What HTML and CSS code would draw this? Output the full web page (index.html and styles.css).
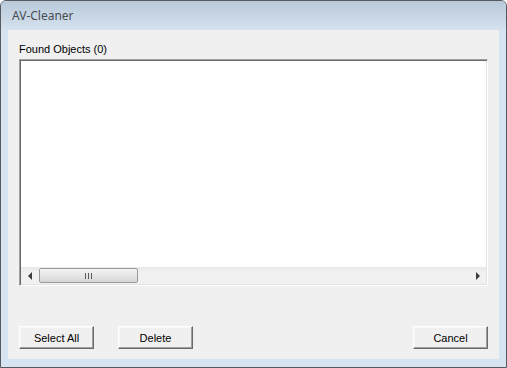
FILE: index.html
```html
<!DOCTYPE html>
<html lang="en">
<head>
  <meta charset="UTF-8">
  <title>AV-Cleaner</title>
  <link rel="stylesheet" href="styles.css">
</head>
<body>

<div class="window">
  <div class="title-bar">AV-Cleaner</div>
  <div class="client">
    <div class="list-label">Found Objects (0)</div>
    <div class="list-box">
      <div class="list-body"></div>
      <div class="h-scroll">
        <div class="arrow left"><span></span></div>
        <div class="track">
          <div class="thumb"><i></i><i></i><i></i></div>
        </div>
        <div class="arrow right"><span></span></div>
      </div>
    </div>
    <div class="buttons">
      <button>Select All</button>
      <button>Delete</button>
      <button class="push-right">Cancel</button>
    </div>
  </div>
</div>

</body>
</html>
```

FILE: styles.css
```css
body {
  margin: 0;
  font-family: 'Liberation Sans', Arial, sans-serif;
  font-size: 11px;
  background: #ffffff;
}

.window {
  width: 505px;
  height: 366px;
  border: 1px solid #555a60;
  border-radius: 6px 6px 0 0;
  background: #d6e3f0;
  display: flex;
  flex-direction: column;
}

.title-bar {
  height: 29px;
  line-height: 29px;
  padding-left: 11px;
  font-family: 'Noto Sans', 'Open Sans', sans-serif;
  font-size: 12px;
  color: #474c52;
  background: linear-gradient(to bottom, #b9c9d8, #d5e2ef);
  border-radius: 5px 5px 0 0;
}

.client {
  margin: 0 7px 8px;
  height: 329px;
  box-sizing: border-box;
  padding: 12px 11px 10px;
  background: #f0f0f0;
  display: flex;
  flex-direction: column;
}

.list-label {
  height: 14px;
  line-height: 14px;
  margin-bottom: 3px;
  color: #000;
}

.list-box {
  height: 227px;
  box-sizing: border-box;
  border: 1px solid;
  border-color: #a0a0a0 #ffffff #ffffff #a0a0a0;
  box-shadow: inset 1px 1px #696969, inset -1px -1px #e3e3e3;
  background: #ffffff;
  padding: 1px;
  display: flex;
  flex-direction: column;
}

.list-body {
  flex: 1;
}

.h-scroll {
  height: 17px;
  display: flex;
  background: linear-gradient(to bottom, #e8e8e8, #f2f2f2 40%, #f0f0f0);
}

.arrow {
  width: 17px;
  display: flex;
  align-items: center;
  justify-content: center;
}

.arrow span {
  width: 0;
  height: 0;
  border-top: 4px solid transparent;
  border-bottom: 4px solid transparent;
}

.arrow.left span {
  border-right: 4px solid #3c3c3c;
}

.arrow.right span {
  border-left: 4px solid #3c3c3c;
}

.track {
  flex: 1;
  display: flex;
  align-items: center;
}

.thumb {
  width: 99px;
  height: 15px;
  box-sizing: border-box;
  margin-left: 1px;
  border: 1px solid #9a9a9a;
  border-radius: 2px;
  background: linear-gradient(to bottom, #f4f4f4, #e6e6e6 50%, #d6d6d6);
  display: flex;
  align-items: center;
  justify-content: center;
  gap: 2px;
}

.thumb i {
  width: 1px;
  height: 6px;
  background: #5a5a5a;
}

.buttons {
  margin-top: auto;
  display: flex;
  gap: 24px;
}

button {
  width: 75px;
  height: 23px;
  padding: 0;
  font-family: 'Liberation Sans', Arial, sans-serif;
  font-size: 11px;
  color: #000;
  background: #f0f0f0;
  border: 1px solid;
  border-color: #ffffff #696969 #696969 #ffffff;
  box-shadow: inset -1px -1px #a0a0a0, inset 1px 1px #f8f8f8;
}

.push-right {
  margin-left: auto;
}
```
